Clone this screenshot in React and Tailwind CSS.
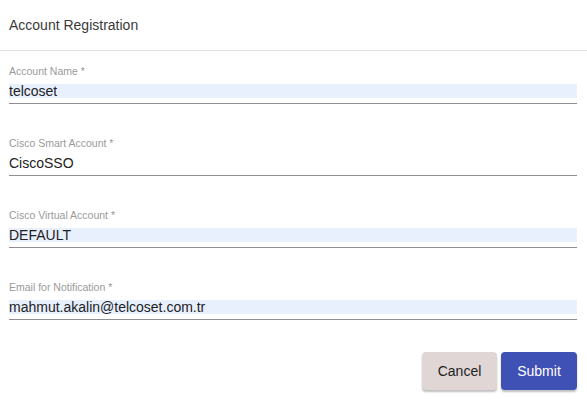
import React from 'react';

const fields = [
  { label: 'Account Name *', value: 'telcoset', filled: true },
  { label: 'Cisco Smart Account *', value: 'CiscoSSO', filled: false },
  { label: 'Cisco Virtual Account *', value: 'DEFAULT', filled: true },
  { label: 'Email for Notification *', value: 'mahmut.akalin@telcoset.com.tr', filled: true },
];

const Field = ({ label, value, filled, first }) => (
  <div className={first ? 'pt-[14px]' : 'pt-[33px]'}>
    <div className="h-[12px] text-[10.5px] leading-[12px] text-[#9a9a9a]">{label}</div>
    <div className={`mt-[7px] h-[14px] flex items-center ${filled ? 'bg-[#e8f0fe]' : ''}`}>
      <span className="text-[14px] leading-none text-[#222]">{value}</span>
    </div>
    <div className="mt-[5px] h-px bg-[#8f8f8f]" />
  </div>
);

export default function App() {
  return (
    <div className="w-[587px] h-[402px] bg-white font-['Liberation_Sans',Arial,sans-serif]">
      {/* header */}
      <div className="h-[51px] px-[9px] flex items-center border-b border-[#e2e2e2]">
        <h1 className="text-[14px] text-[#3a3a3a]">Account Registration</h1>
      </div>

      {/* form */}
      <div className="pl-[9px] pr-[10px]">
        {fields.map((f, i) => (
          <Field key={f.label} {...f} first={i === 0} />
        ))}

        <div className="mt-[32px] flex justify-end gap-[4px]">
          <button className="w-[75px] h-[38px] rounded-[4px] bg-[#e0d6d6] text-[14px] text-[#222] shadow-[0_2px_2px_rgba(0,0,0,0.25)]">
            Cancel
          </button>
          <button className="w-[76px] h-[38px] rounded-[4px] bg-[#3f51b5] text-[14px] text-white shadow-[0_2px_2px_rgba(0,0,0,0.25)]">
            Submit
          </button>
        </div>
      </div>
    </div>
  );
}
